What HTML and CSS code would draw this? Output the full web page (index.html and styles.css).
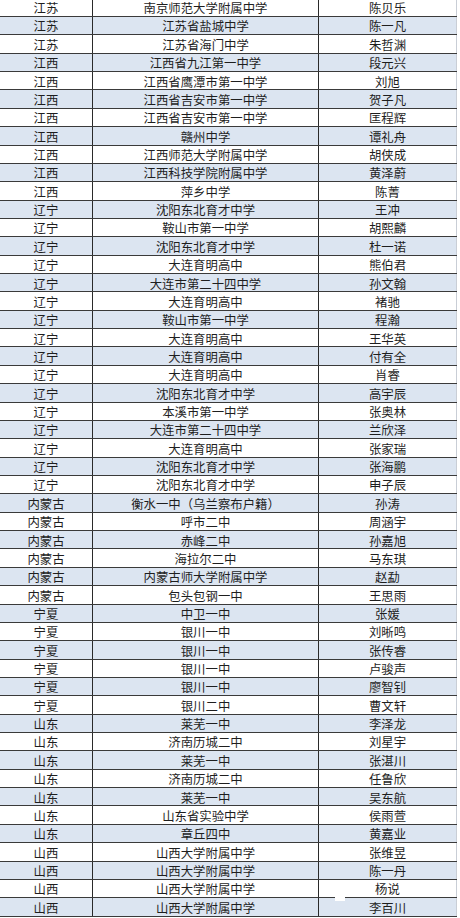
FILE: index.html
```html
<!DOCTYPE html>
<html lang="zh-CN">
<head>
<meta charset="utf-8">
<title>名单</title>
<link rel="stylesheet" href="styles.css">
</head>
<body>
<div class="sheet">
  <div class="row"><div class="c1">江苏</div><div class="c2">南京师范大学附属中学</div><div class="c3">陈贝乐</div></div>
  <div class="row"><div class="c1">江苏</div><div class="c2">江苏省盐城中学</div><div class="c3">陈一凡</div></div>
  <div class="row"><div class="c1">江苏</div><div class="c2">江苏省海门中学</div><div class="c3">朱哲渊</div></div>
  <div class="row"><div class="c1">江西</div><div class="c2">江西省九江第一中学</div><div class="c3">段元兴</div></div>
  <div class="row"><div class="c1">江西</div><div class="c2">江西省鹰潭市第一中学</div><div class="c3">刘旭</div></div>
  <div class="row"><div class="c1">江西</div><div class="c2">江西省吉安市第一中学</div><div class="c3">贺子凡</div></div>
  <div class="row"><div class="c1">江西</div><div class="c2">江西省吉安市第一中学</div><div class="c3">匡程辉</div></div>
  <div class="row"><div class="c1">江西</div><div class="c2">赣州中学</div><div class="c3">谭礼舟</div></div>
  <div class="row"><div class="c1">江西</div><div class="c2">江西师范大学附属中学</div><div class="c3">胡侠成</div></div>
  <div class="row"><div class="c1">江西</div><div class="c2">江西科技学院附属中学</div><div class="c3">黄泽蔚</div></div>
  <div class="row"><div class="c1">江西</div><div class="c2">萍乡中学</div><div class="c3">陈菁</div></div>
  <div class="row"><div class="c1">辽宁</div><div class="c2">沈阳东北育才中学</div><div class="c3">王冲</div></div>
  <div class="row"><div class="c1">辽宁</div><div class="c2">鞍山市第一中学</div><div class="c3">胡熙麟</div></div>
  <div class="row"><div class="c1">辽宁</div><div class="c2">沈阳东北育才中学</div><div class="c3">杜一诺</div></div>
  <div class="row"><div class="c1">辽宁</div><div class="c2">大连育明高中</div><div class="c3">熊伯君</div></div>
  <div class="row"><div class="c1">辽宁</div><div class="c2">大连市第二十四中学</div><div class="c3">孙文翰</div></div>
  <div class="row"><div class="c1">辽宁</div><div class="c2">大连育明高中</div><div class="c3">褚驰</div></div>
  <div class="row"><div class="c1">辽宁</div><div class="c2">鞍山市第一中学</div><div class="c3">程瀚</div></div>
  <div class="row"><div class="c1">辽宁</div><div class="c2">大连育明高中</div><div class="c3">王华英</div></div>
  <div class="row"><div class="c1">辽宁</div><div class="c2">大连育明高中</div><div class="c3">付有全</div></div>
  <div class="row"><div class="c1">辽宁</div><div class="c2">大连育明高中</div><div class="c3">肖睿</div></div>
  <div class="row"><div class="c1">辽宁</div><div class="c2">沈阳东北育才中学</div><div class="c3">高宇辰</div></div>
  <div class="row"><div class="c1">辽宁</div><div class="c2">本溪市第一中学</div><div class="c3">张奥林</div></div>
  <div class="row"><div class="c1">辽宁</div><div class="c2">大连市第二十四中学</div><div class="c3">兰欣泽</div></div>
  <div class="row"><div class="c1">辽宁</div><div class="c2">大连育明高中</div><div class="c3">张家瑞</div></div>
  <div class="row"><div class="c1">辽宁</div><div class="c2">沈阳东北育才中学</div><div class="c3">张海鹏</div></div>
  <div class="row"><div class="c1">辽宁</div><div class="c2">沈阳东北育才中学</div><div class="c3">申子辰</div></div>
  <div class="row"><div class="c1">内蒙古</div><div class="c2">衡水一中（乌兰察布户籍）</div><div class="c3">孙涛</div></div>
  <div class="row"><div class="c1">内蒙古</div><div class="c2">呼市二中</div><div class="c3">周涵宇</div></div>
  <div class="row"><div class="c1">内蒙古</div><div class="c2">赤峰二中</div><div class="c3">孙嘉旭</div></div>
  <div class="row"><div class="c1">内蒙古</div><div class="c2">海拉尔二中</div><div class="c3">马东琪</div></div>
  <div class="row"><div class="c1">内蒙古</div><div class="c2">内蒙古师大学附属中学</div><div class="c3">赵勐</div></div>
  <div class="row"><div class="c1">内蒙古</div><div class="c2">包头包钢一中</div><div class="c3">王思雨</div></div>
  <div class="row"><div class="c1">宁夏</div><div class="c2">中卫一中</div><div class="c3">张媛</div></div>
  <div class="row"><div class="c1">宁夏</div><div class="c2">银川一中</div><div class="c3">刘晰鸣</div></div>
  <div class="row"><div class="c1">宁夏</div><div class="c2">银川一中</div><div class="c3">张传睿</div></div>
  <div class="row"><div class="c1">宁夏</div><div class="c2">银川一中</div><div class="c3">卢骏声</div></div>
  <div class="row"><div class="c1">宁夏</div><div class="c2">银川一中</div><div class="c3">廖智钊</div></div>
  <div class="row"><div class="c1">宁夏</div><div class="c2">银川二中</div><div class="c3">曹文轩</div></div>
  <div class="row"><div class="c1">山东</div><div class="c2">莱芜一中</div><div class="c3">李泽龙</div></div>
  <div class="row"><div class="c1">山东</div><div class="c2">济南历城二中</div><div class="c3">刘星宇</div></div>
  <div class="row"><div class="c1">山东</div><div class="c2">莱芜一中</div><div class="c3">张湛川</div></div>
  <div class="row"><div class="c1">山东</div><div class="c2">济南历城二中</div><div class="c3">任鲁欣</div></div>
  <div class="row"><div class="c1">山东</div><div class="c2">莱芜一中</div><div class="c3">吴东航</div></div>
  <div class="row"><div class="c1">山东</div><div class="c2">山东省实验中学</div><div class="c3">侯雨萱</div></div>
  <div class="row"><div class="c1">山东</div><div class="c2">章丘四中</div><div class="c3">黄嘉业</div></div>
  <div class="row"><div class="c1">山西</div><div class="c2">山西大学附属中学</div><div class="c3">张维昱</div></div>
  <div class="row"><div class="c1">山西</div><div class="c2">山西大学附属中学</div><div class="c3">陈一丹</div></div>
  <div class="row"><div class="c1">山西</div><div class="c2">山西大学附属中学</div><div class="c3">杨说</div></div>
  <div class="row"><div class="c1">山西</div><div class="c2">山西大学附属中学</div><div class="c3">李百川</div></div>
  <div class="mark"></div>
</div>
</body>
</html>
```

FILE: styles.css
```css
html, body {
  margin: 0;
  padding: 0;
  background: #ffffff;
}

body {
  width: 460px;
  height: 918px;
  overflow: hidden;
  font-family: "Noto Sans CJK SC", "Microsoft YaHei", sans-serif;
  font-size: 12.4px;
  color: #1e1e1e;
}

.sheet {
  position: relative;
  width: 457px;
  margin-top: -1.36px;
  display: flex;
  flex-direction: column;
}

.row {
  display: grid;
  grid-template-columns: 93px 226px 138px;
  height: 18.36px;
  box-sizing: border-box;
  border-bottom: 1px solid #3a3a3a;
  background: #ffffff;
}

.row:nth-child(even) {
  background: #dce5f1;
}

.row > div {
  display: flex;
  align-items: center;
  justify-content: center;
  line-height: 1;
  padding-top: 2px;
  white-space: nowrap;
  box-sizing: border-box;
}

.c1 {
  border-right: 1px solid #2a2a2a;
}

.c2 {
  border-right: 1px solid #2a2a2a;
}

.c3 {
  border-right: 1px solid #c9ced6;
}

.mark {
  position: absolute;
  left: 335px;
  top: 898px;
  width: 10px;
  height: 4px;
  background: #ffffff;
}
```
